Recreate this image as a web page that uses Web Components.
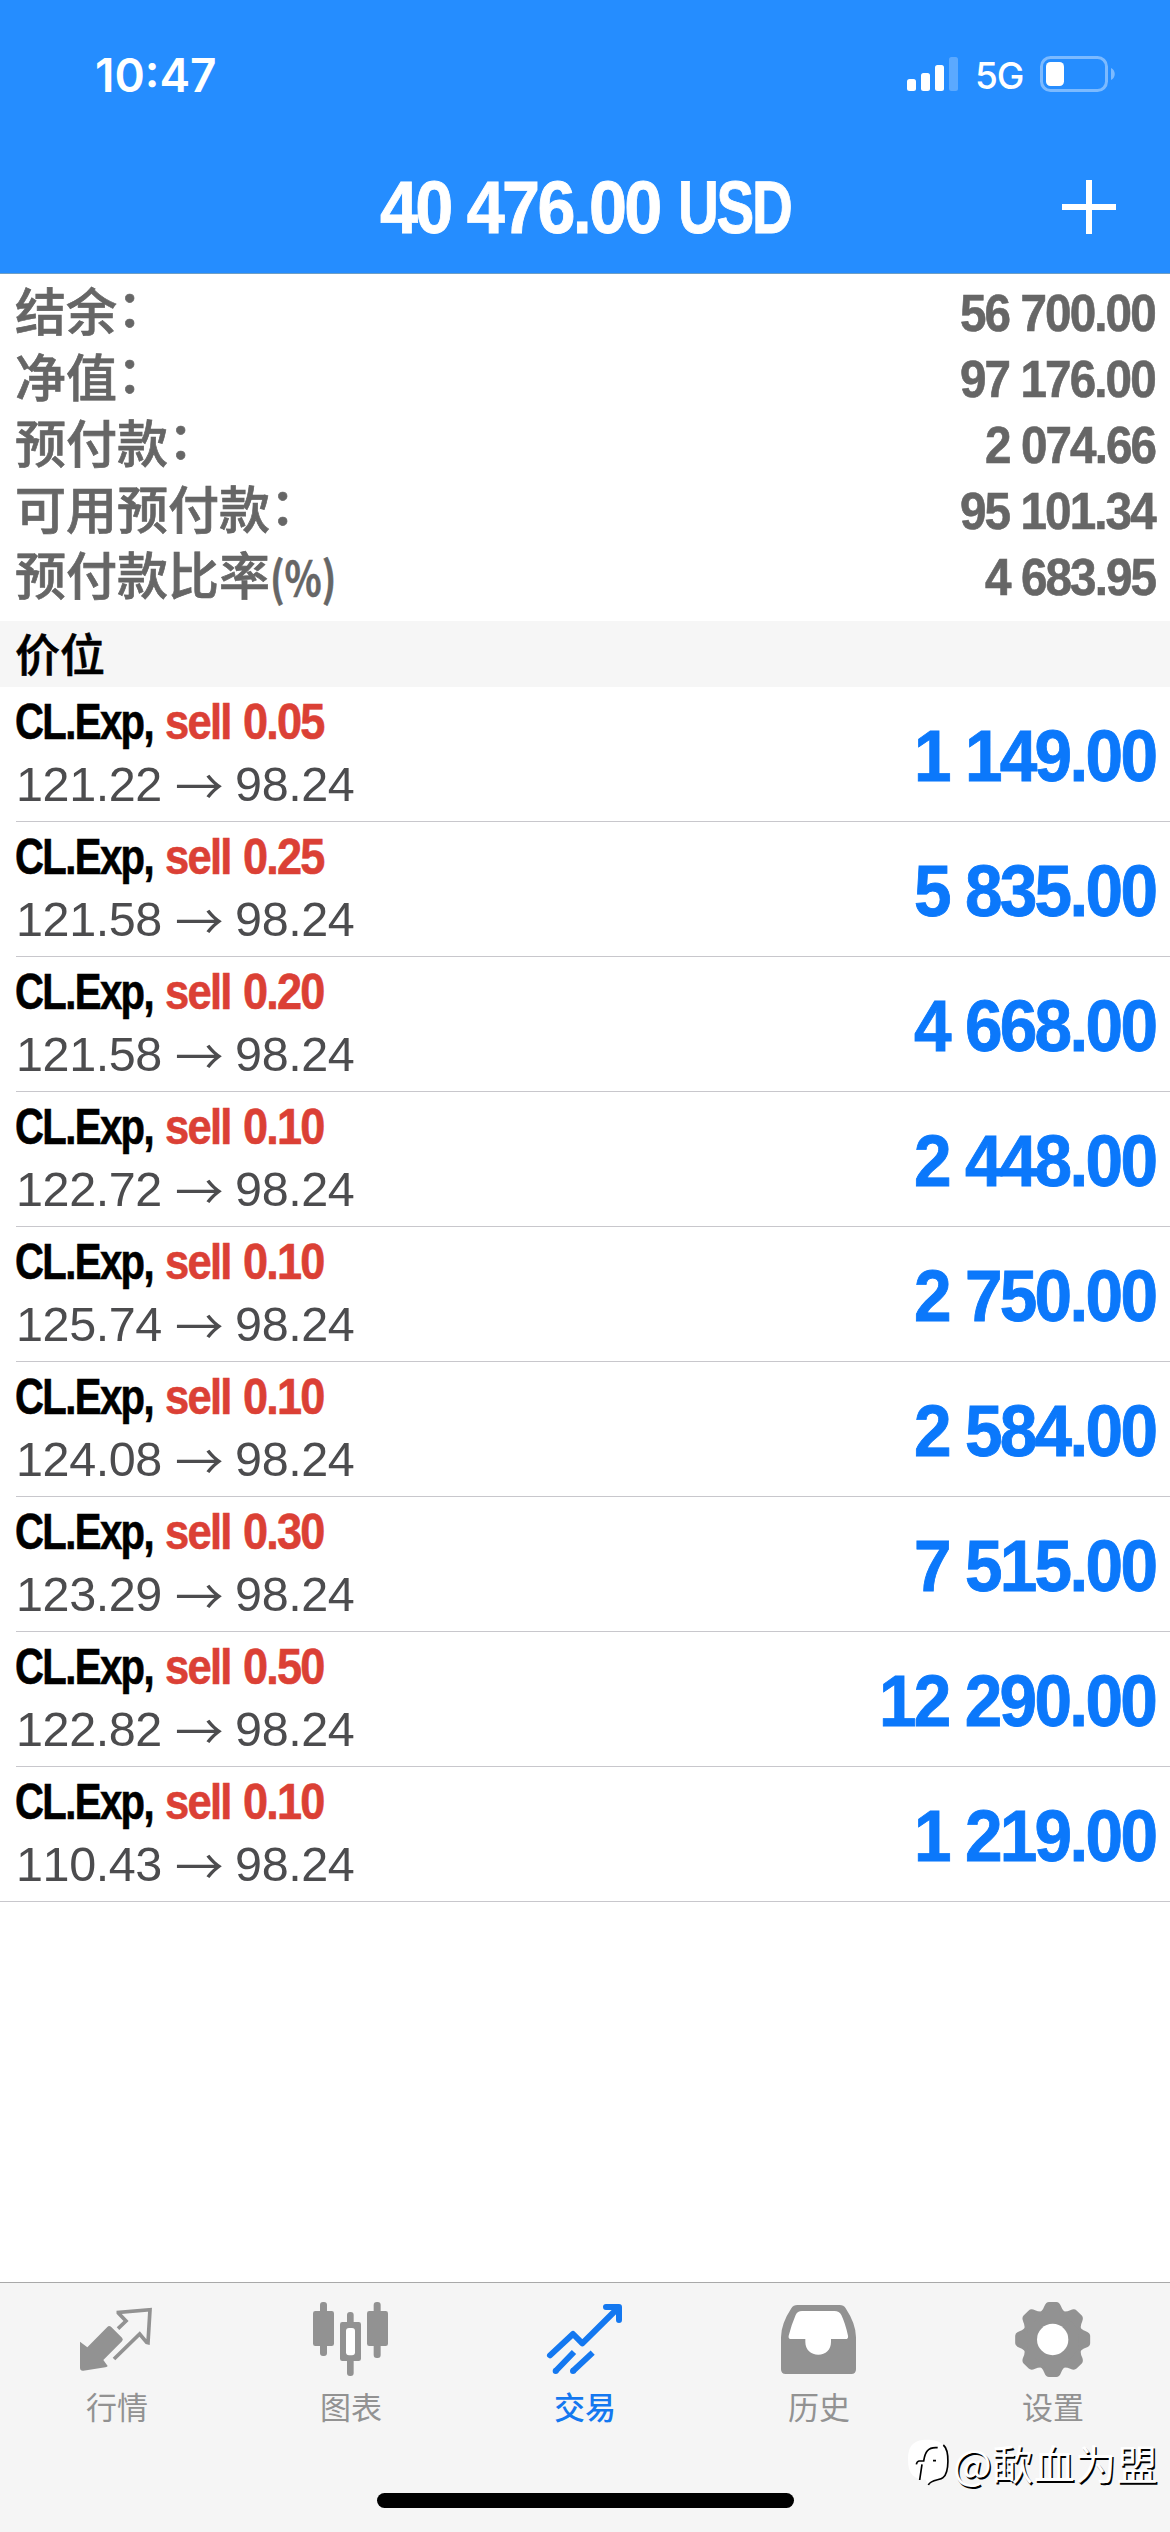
<!DOCTYPE html>
<html lang="zh-CN">
<head>
<meta charset="utf-8">
<title>交易</title>
<style>
    html, body { margin: 0; padding: 0; }
    body {
        width: 1170px;
        height: 2532px;
        overflow: hidden;
        background: #fff;
        font-family: "Liberation Sans", "Noto Sans CJK SC", sans-serif;
    }
</style>
</head>
<body>
<trade-app></trade-app>

<script>
function define(name, html, setup) {
    const template = document.createElement('template');
    template.innerHTML = html;
    window.customElements.define(name, class extends HTMLElement {
        constructor() {
            super();
            this.attachShadow({ mode: 'open' });
            this.shadowRoot.appendChild(template.content.cloneNode(true));
        }
        connectedCallback() {
            if (setup) setup(this, this.shadowRoot);
        }
    });
}

define('status-bar', `
    <style>
        :host {
            display: flex;
            align-items: center;
            height: 148px;
            padding: 0 53px 0 95px;
            box-sizing: border-box;
            color: #fff;
        }
        .time { flex: 1; font: 600 46px/60px Inter, sans-serif; padding-top: 1px; }
        .net { font: 500 37px/60px Inter, sans-serif; letter-spacing: -1px; margin: 4px 16px 0 16px; width: 49px; }
        svg { display: block; }
    </style>
    <span class="time">10:47</span>
    <svg width="52" height="36" viewBox="0 0 52 36" fill="#fff">
        <rect x="0" y="23" width="9" height="12" rx="2.5"/>
        <rect x="14" y="17" width="9" height="18" rx="2.5"/>
        <rect x="28" y="9" width="9" height="26" rx="2.5"/>
        <rect x="42" y="1" width="9" height="34" rx="2.5" opacity=".25"/>
    </svg>
    <span class="net">5G</span>
    <svg width="77" height="36" viewBox="0 0 77 36">
        <rect x="1.5" y="1.5" width="65" height="33" rx="9" fill="none" stroke="#fff" stroke-width="3" opacity=".4"/>
        <rect x="6" y="6" width="18" height="24" rx="4.5" fill="#fff"/>
        <path d="M71 12c5 2 5 10 0 12z" fill="#fff" opacity=".4"/>
    </svg>
`);

define('app-header', `
    <style>
        :host {
            display: block;
            height: 274px;
            box-sizing: border-box;
            background: #258dff;
            border-bottom: 1px solid #6f9fc4;
            color: #fff;
        }
        .bar {
            display: grid;
            grid-template-columns: 54px 1fr 54px;
            align-items: center;
            height: 117px;
            padding: 0 54px;
        }
        .title { display: flex; justify-content: center; gap: 18px; font-size: 73.5px; line-height: 80px; padding-top: 2px; }
        .sum { --squeeze: 0.93; }
        .unit { --squeeze: 0.77; }
    </style>
    <status-bar></status-bar>
    <div class="bar">
        <span></span>
        <div class="title">
            <narrow-text class="sum"><slot></slot></narrow-text>
            <narrow-text class="unit"><slot name="unit"></slot></narrow-text>
        </div>
        <svg width="54" height="54" viewBox="0 0 54 54" stroke="#fff" stroke-width="6"><path d="M27 0v54M0 27h54"/></svg>
    </div>
`);

define('summary-row', `
    <style>
        :host {
            display: flex;
            justify-content: space-between;
            height: 66px;
            padding: 0 15px;
            color: #666;
        }
        .label {
            display: flex;
            font: 500 51px/69px "Liberation Sans", "Noto Sans CJK SC", sans-serif;
            -webkit-text-stroke: 0.7px;
        }
        .colon { line-height: 62px; }
        .unit {
            --squeeze: 0.82;
            --face: "Noto Sans CJK SC", sans-serif;
            --weight: 700;
            --tracking: 0;
            font-size: 47px;
            line-height: 65px;
        }
        .unit:empty { display: none; }
        .value { --squeeze: 0.925; font-size: 51.5px; line-height: 68px; }
    </style>
    <div class="label"><span class="name"></span><span class="colon"></span><narrow-text class="unit"></narrow-text></div>
    <narrow-text class="value"><slot></slot></narrow-text>
`, (el, root) => {
    const unit = el.getAttribute('unit');
    root.querySelector('.name').textContent = el.getAttribute('label');
    root.querySelector('.colon').textContent = unit ? '' : '：';
    root.querySelector('.unit').textContent = unit || '';
});

define('section-title', `
    <style>
        :host {
            display: block;
            height: 66px;
            padding-left: 15px;
            background: #f6f6f6;
            color: #000;
            font: 500 45px/71px "Liberation Sans", "Noto Sans CJK SC", sans-serif;
            -webkit-text-stroke: 0.6px;
        }
    </style>
    <slot></slot>
`);

define('position-row', `
    <style>
        :host { display: block; padding-left: 16px; }
        :host(:last-of-type) { padding-left: 0; }
        :host(:last-of-type) .row { padding-left: 16px; }
        .row {
            display: flex;
            align-items: center;
            justify-content: space-between;
            height: 135px;
            box-sizing: border-box;
            padding-right: 15px;
            border-bottom: 1px solid #c8c7cc;
        }
        .info { display: flex; flex-direction: column; }
        .name { display: flex; font-size: 49.5px; line-height: 60px; color: #000; margin-left: -1px; }
        .symbol { --squeeze: 0.81; margin-right: 12px; }
        .side, .volume { color: #db4035; }
        .side { --squeeze: 0.88; margin-right: 12px; }
        .volume { --squeeze: 0.91; }
        .price {
            display: flex;
            align-items: center;
            font-size: 48.5px;
            line-height: 64px;
            letter-spacing: -0.4px;
            font-kerning: none;
            color: #4c4c4e;
        }
        .arrow { font-family: "Noto Sans CJK SC", sans-serif; font-weight: 400; margin: 0 12px 0 13px; }
        .profit { --squeeze: 0.925; font-size: 73px; line-height: 80px; padding-top: 3px; color: #0b78fb; }
    </style>
    <div class="row">
        <div class="info">
            <div class="name">
                <narrow-text class="symbol">CL.Exp,</narrow-text>
                <narrow-text class="side">sell</narrow-text>
                <narrow-text class="volume"></narrow-text>
            </div>
            <div class="price"><span class="open"></span><span class="arrow">→</span><span>98.24</span></div>
        </div>
        <narrow-text class="profit"><slot></slot></narrow-text>
    </div>
`, (el, root) => {
    root.querySelector('.volume').textContent = el.getAttribute('volume');
    root.querySelector('.open').textContent = el.getAttribute('open');
});

define('tab-item', `
    <style>
        :host {
            display: flex;
            flex-direction: column;
            align-items: center;
            flex: 1;
            color: #929292;
        }
        :host([active]) { color: #1478f0; }
        ::slotted(svg) { display: block; width: 80px; height: 80px; }
        .label { font: 400 31px/40px "Noto Sans CJK SC", sans-serif; margin-top: 6px; }
        :host([active]) .label { font-weight: 500; }
    </style>
    <slot></slot>
    <span class="label"></span>
`, (el, root) => {
    root.querySelector('.label').textContent = el.getAttribute('label');
});

define('tab-bar', `
    <style>
        :host {
            display: flex;
            flex-direction: column;
            align-items: center;
            height: 250px;
            box-sizing: border-box;
            background: #f5f5f5;
            border-top: 1px solid #a9a9a9;
        }
        .tabs { display: flex; width: 100%; height: 193px; padding-top: 17px; }
        .home { width: 417px; height: 15px; border-radius: 8px; background: #000; }
    </style>
    <div class="tabs">
        <tab-item label="行情">
            <svg viewBox="231 120 240 240" fill="none">
                <path fill="currentColor" d="M240 245L262 262L322 201Q327 195 333 200L366 233Q371 238 366 244L310 300L323 318Q322 321 316 322L250 332Q240 333 240 323Z"/>
                <path stroke="currentColor" stroke-width="11" d="M354 206L378 183L355 159V157L450 149L444 248L440 247L419 222L342 297"/>
            </svg>
        </tab-item>
        <tab-item label="图表">
            <svg viewBox="933 120 240 240" fill="currentColor">
                <rect x="960" y="126" width="21" height="162" rx="9"/>
                <rect x="939" y="153" width="63" height="105" rx="7"/>
                <rect x="1121" y="126" width="21" height="168" rx="9"/>
                <rect x="1101" y="153" width="63" height="105" rx="7"/>
                <rect x="1041" y="156" width="20" height="192" rx="9"/>
                <rect x="1020" y="186" width="63" height="117" rx="7"/>
                <rect x="1038" y="204" width="27" height="82" rx="9" fill="#fff"/>
            </svg>
        </tab-item>
        <tab-item label="交易" active>
            <svg viewBox="375 120 240 240" fill="none" stroke="currentColor" stroke-width="18" stroke-linecap="round" stroke-linejoin="round">
                <path d="M390 286L459 222L487 250L594 144M558 141H597V180"/>
                <path stroke-linecap="butt" d="M407 333L462 276M459 333L518 278"/>
                <path d="M407 333h.1M459 333h.1"/>
                <path fill="currentColor" stroke="none" d="M574 141H597V166Z"/>
            </svg>
        </tab-item>
        <tab-item label="历史">
            <svg viewBox="177 120 240 240">
                <path fill="currentColor" d="M232 135H359Q371 135 377 145Q408 192 408 232V328Q408 342 394 342H197Q183 342 183 328V232Q183 192 214 145Q220 135 232 135Z"/>
                <path fill="#fff" d="M246 153H343Q358 153 364 165Q376 190 384 227Q386 237 376 237H333V246C333 270 317 284 295 284S256 270 256 246V237H214Q204 237 206 227Q214 195 227 165Q232 153 246 153Z"/>
            </svg>
        </tab-item>
        <tab-item label="设置">
            <svg viewBox="879 120 240 240">
                <g fill="currentColor">
                    <circle cx="998" cy="238.500" r="88"/>
                    <g id="teeth"></g>
                </g>
                <circle cx="998" cy="238.500" r="47" fill="#fff"/>
            </svg>
        </tab-item>
    </div>
    <div class="home"></div>
`, (el, root) => {
    // eight gear teeth around the hub
    const tooth = 'M952 162Q968 154 973 139Q978 126 987 126H1009Q1018 126 1023 139Q1028 154 1044 162Z';
    root.getElementById('teeth').innerHTML = [0, 45, 90, 135, 180, 225, 270, 315]
        .map(a => `<path d="${tooth}" transform="rotate(${a} 998 238.500)"/>`).join('');
});

define('user-mark', `
    <style>
        :host {
            position: absolute;
            left: 907px;
            top: 2437px;
            display: flex;
            align-items: center;
            gap: 4px;
            color: #fff;
            font: 400 41px/50px "Noto Sans CJK SC", sans-serif;
            letter-spacing: 0.5px;
            text-shadow: 1.5px 1.5px 0 #000;
            white-space: nowrap;
        }
        svg { display: block; }
    </style>
    <svg width="42" height="50" viewBox="0 0 126 150" fill="none">
        <path fill="#fff" d="M60 8C92 8 121 18 121 60C121 98 110 124 92 130Q72 134 64 144L56 128C20 128 3 110 3 68C3 24 22 8 60 8Z"/>
        <path stroke="#000" stroke-width="5" d="M109 24C128 40 127 108 108 122C99 130 71 127 64 144"/>
        <path stroke="#000" stroke-width="5" d="M28 82Q30 73 36 72H50C54 46 62 29 92 32M78 71H87M52 72H44M45 82L38 129"/>
    </svg>
    <span><slot></slot></span>
`);

define('trade-app', `
    <style>
        :host { display: flex; flex-direction: column; width: 1170px; height: 2532px; background: #fff; }
        .summary { padding: 5px 0 12px; height: 330px; }
        .positions { flex: 1; }
    </style>
    <app-header>40 476.00<span slot="unit">USD</span></app-header>
    <div class="summary">
        <summary-row label="结余">56 700.00</summary-row>
        <summary-row label="净值">97 176.00</summary-row>
        <summary-row label="预付款">2 074.66</summary-row>
        <summary-row label="可用预付款">95 101.34</summary-row>
        <summary-row label="预付款比率" unit="(%)">4 683.95</summary-row>
    </div>
    <section-title>价位</section-title>
    <div class="positions">
        <position-row volume="0.05" open="121.22">1 149.00</position-row>
        <position-row volume="0.25" open="121.58">5 835.00</position-row>
        <position-row volume="0.20" open="121.58">4 668.00</position-row>
        <position-row volume="0.10" open="122.72">2 448.00</position-row>
        <position-row volume="0.10" open="125.74">2 750.00</position-row>
        <position-row volume="0.10" open="124.08">2 584.00</position-row>
        <position-row volume="0.30" open="123.29">7 515.00</position-row>
        <position-row volume="0.50" open="122.82">12 290.00</position-row>
        <position-row volume="0.10" open="110.43">1 219.00</position-row>
    </div>
    <tab-bar></tab-bar>
    <user-mark>@歃血为盟</user-mark>
`);

// condensed bold text; defined last so that its content is in place when it is measured
define('narrow-text', `
    <style>
        :host {
            display: block;
            font-family: var(--face, "Liberation Sans", sans-serif);
            font-weight: var(--weight, 700);
            letter-spacing: var(--tracking, -0.04em);
            font-kerning: none;
            white-space: nowrap;
        }
        .text {
            display: inline-block;
            transform: scaleX(var(--squeeze, 0.92));
            transform-origin: left center;
            -webkit-text-stroke: 0.012em;
        }
    </style>
    <span class="text"><slot></slot></span>
`, (el, root) => {
    const squeeze = parseFloat(getComputedStyle(el).getPropertyValue('--squeeze')) || 0.92;
    el.style.width = root.querySelector('.text').offsetWidth * squeeze + 'px';
});
</script>
</body>
</html>
